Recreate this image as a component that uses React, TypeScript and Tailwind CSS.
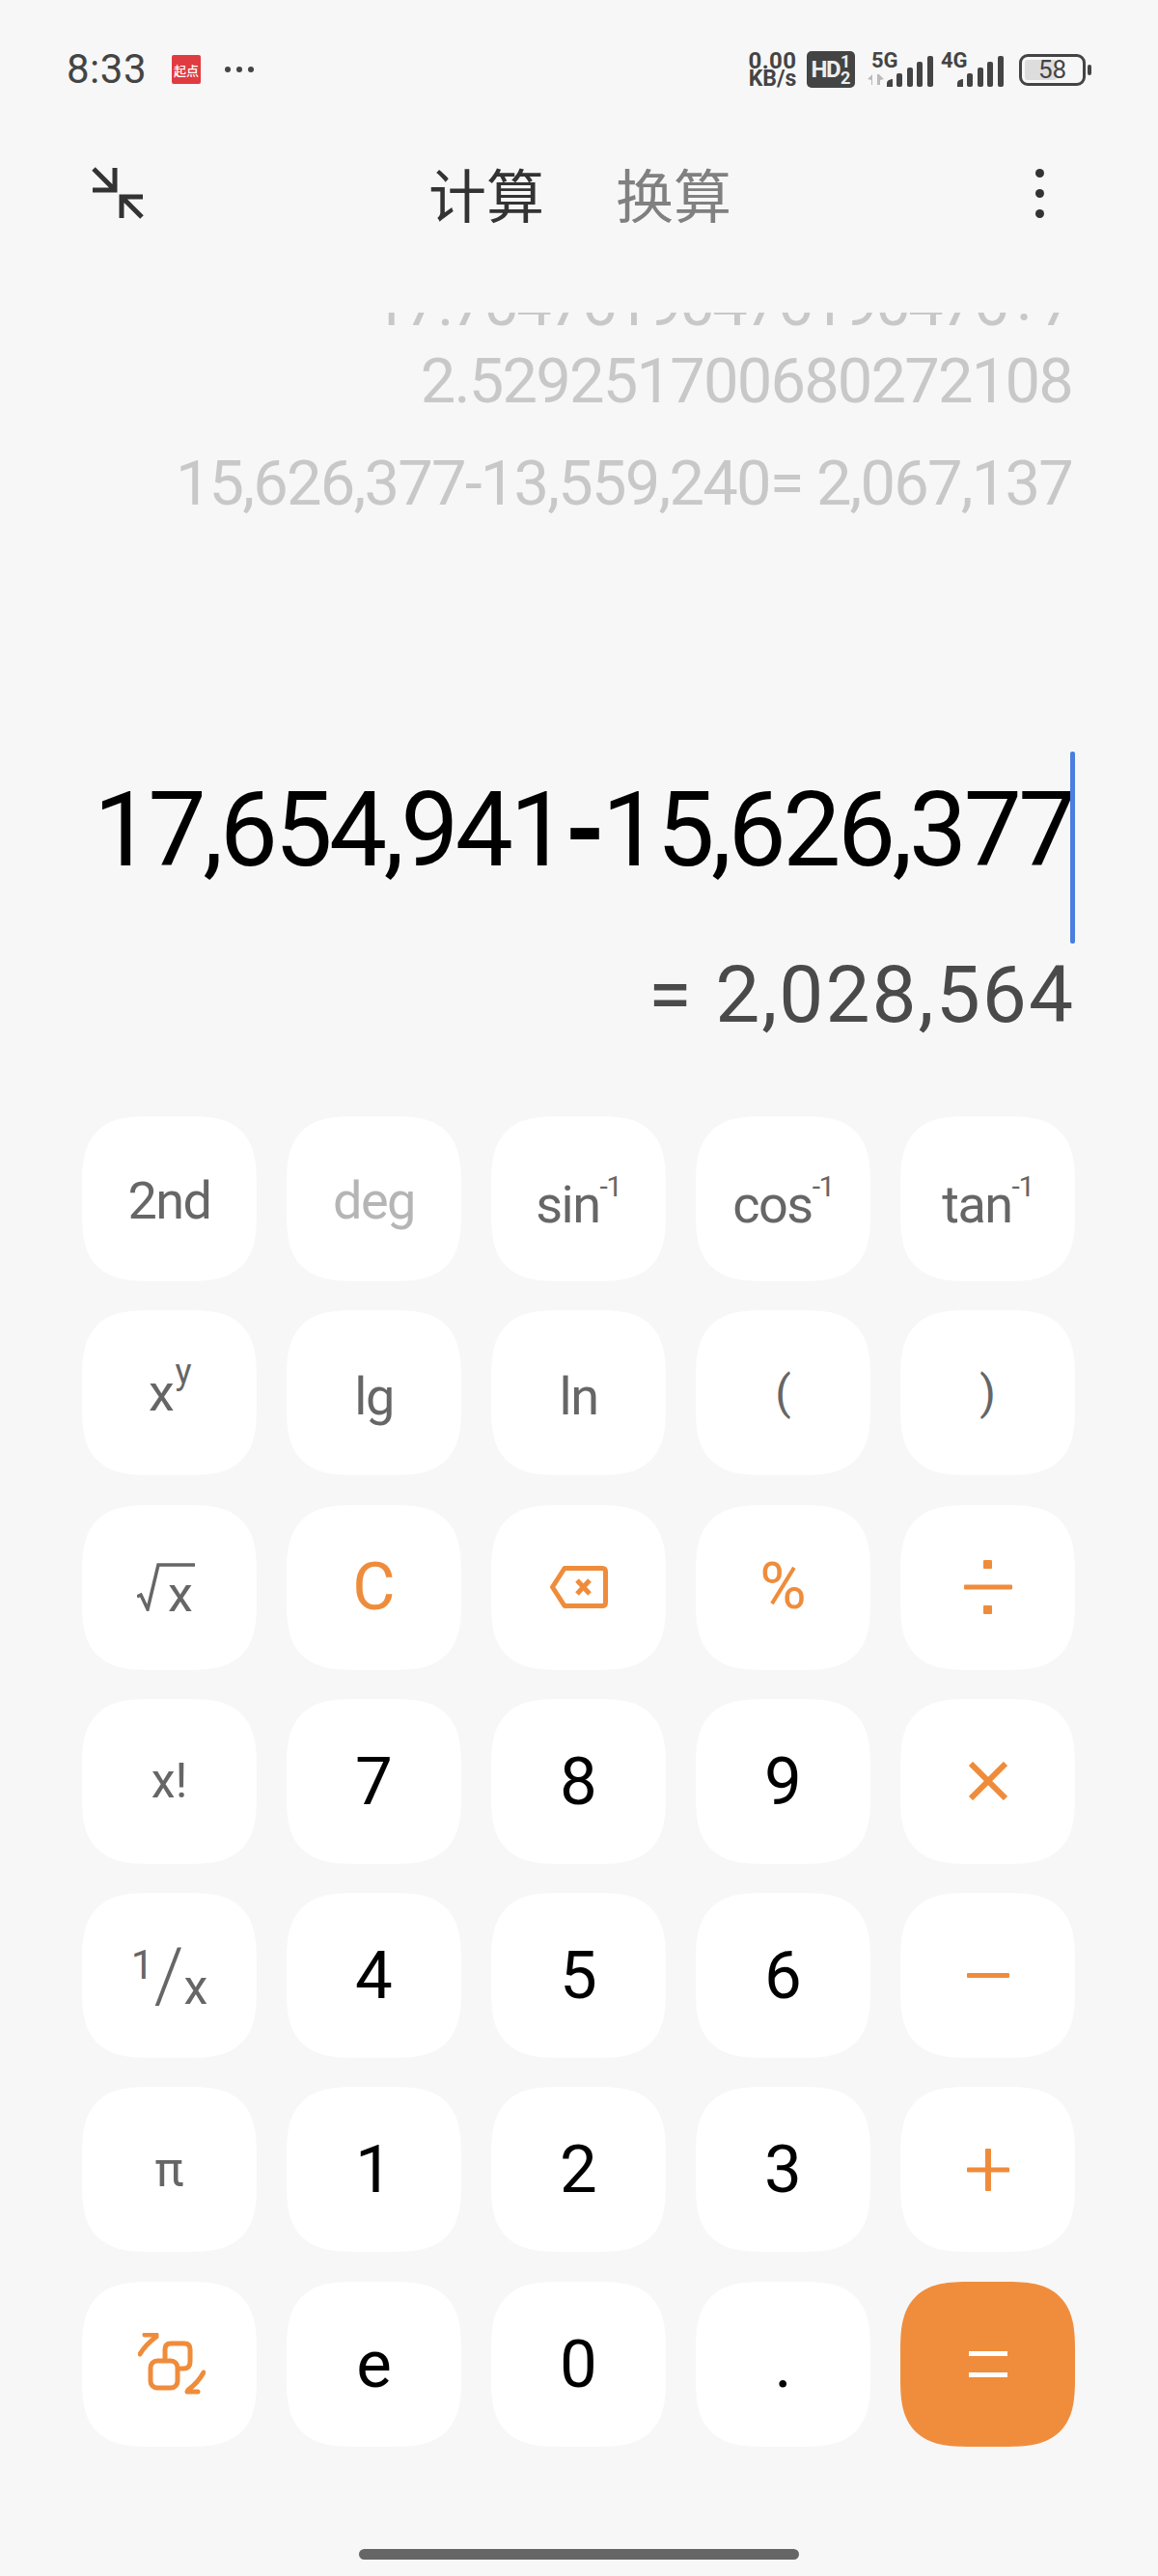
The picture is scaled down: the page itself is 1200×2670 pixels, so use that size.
import type { ReactNode } from "react";

const fnKey = "text-[#666666] text-[54px] tracking-[-1.5px]";
const orangeKey = "text-[#ef8c3b]";

function Key({ children, className = "", bg = "bg-white" }: { children: ReactNode; className?: string; bg?: string }) {
  return (
    <div
      className={`flex items-center justify-center rounded-[72px] [corner-shape:superellipse(1.5)] ${bg} ${className}`}
    >
      {children}
    </div>
  );
}

function Signal() {
  return (
    <svg width="48" height="32" viewBox="0 0 48 32" fill="#444444">
      <path d="M0 32 V28 Q0 25 5 24 H6 V32 Z" />
      <rect x="10" y="18" width="6" height="14" rx="2" />
      <rect x="21" y="12" width="6" height="20" rx="2" />
      <rect x="31" y="6" width="6" height="26" rx="2" />
      <rect x="42" y="0" width="6" height="32" rx="2" />
    </svg>
  );
}

function StatusBar() {
  return (
    <div className="flex h-[144px] items-center">
      <span className="ml-[69px] text-[42px] leading-none tracking-[0.5px] text-[#444444]">8:33</span>
      <div className="ml-[26px] flex h-[30px] w-[30px] items-center justify-center rounded-[2px] bg-[#e13b42] font-['Noto_Sans_CJK_SC'] text-[13px] font-medium leading-none text-white">
        起点
      </div>
      <div className="ml-[25px] flex gap-[6px]">
        <span className="h-[6px] w-[6px] rounded-full bg-[#444444]" />
        <span className="h-[6px] w-[6px] rounded-full bg-[#444444]" />
        <span className="h-[6px] w-[6px] rounded-full bg-[#444444]" />
      </div>

      <div className="ml-[512px] flex w-[51px] flex-col items-center font-bold text-[#444444]">
        <span className="text-[24px] leading-[20px] tracking-[0.4px]">0.00</span>
        <span className="text-[23px] leading-[18px]">KB/s</span>
      </div>
      <div className="ml-[10px] flex h-[38px] w-[50px] items-center justify-center gap-[1px] rounded-[5px] bg-[#444444] font-bold text-[#eeeeee]">
        <span className="text-[24px] leading-none tracking-[-1.5px]">HD</span>
        <span className="flex flex-col text-[18px] leading-[17px]">
          <span>1</span>
          <span>2</span>
        </span>
      </div>
      <div className="relative ml-[13px] h-[36px] w-[68px]">
        <span className="absolute left-[4px] top-[0px] text-[22px] font-bold leading-[18px] text-[#444444]">5G</span>
        <svg className="absolute left-0 top-[22px]" width="18" height="13" viewBox="0 0 18 13" fill="#bbbbbb">
          <path d="M0 6 L5 1 V12 H4 V7 Z" />
          <path d="M10 12 V1 H12 L17 6 L13 7 V12 Z" />
        </svg>
        <div className="absolute right-0 bottom-0 leading-[0]">
          <Signal />
        </div>
      </div>
      <div className="relative ml-[8px] h-[36px] w-[65px]">
        <span className="absolute left-0 top-[0px] text-[22px] font-bold leading-[18px] text-[#444444]">4G</span>
        <div className="absolute right-0 bottom-0 leading-[0]">
          <Signal />
        </div>
      </div>
      <div className="ml-[16px] flex h-[33px] w-[69px] items-center rounded-[9px] border-[3px] border-[#444444] p-[3px]">
        <div className="relative flex h-full w-full">
          <div className="h-full w-[58%] rounded-[3px] bg-[#dddddd]" />
          <span className="absolute left-[14px] top-0 text-[26px] leading-[21px] text-[#444444]">58</span>
        </div>
      </div>
      <div className="ml-[2px] h-[11px] w-[4px] rounded-[2px] bg-[#444444]" />
    </div>
  );
}

function NavBar() {
  return (
    <div className="flex h-[112px] items-center">
      <svg className="ml-[95px]" width="54" height="54" viewBox="0 0 54 54" fill="none" stroke="#333333" strokeWidth="5">
        <path d="M2 2 L24 24 M24 1 V24 H1" />
        <path d="M31 31 L52 52 M31 53 V31 H53" />
      </svg>
      <div className="ml-[295px] flex font-['Noto_Sans_CJK_SC'] text-[60px] leading-none">
        <span className="text-[#333333]">计算</span>
        <span className="ml-[74px] text-[#808080]">换算</span>
      </div>
      <div className="ml-auto mr-[118px] flex flex-col gap-[12px]">
        <span className="h-[9px] w-[9px] rounded-full bg-[#333333]" />
        <span className="h-[9px] w-[9px] rounded-full bg-[#333333]" />
        <span className="h-[9px] w-[9px] rounded-full bg-[#333333]" />
      </div>
    </div>
  );
}

function Display() {
  return (
    <div className="flex flex-col items-end pr-[89px]">
      <div className="mt-[68px] flex h-[217px] w-full flex-col items-end justify-end overflow-hidden text-[65px] leading-[80px] tracking-[-1.8px] text-[#c8c8c8]">
        <div className="whitespace-nowrap tracking-[-2.7px]">17.70476190476190476÷7</div>
        <div className="whitespace-nowrap">2.529251700680272108</div>
        <div className="mt-[26px] whitespace-nowrap">15,626,377-13,559,240= 2,067,137</div>
      </div>
      <div className="mt-[238px] flex h-[199px] items-start">
        <span className="mt-[19px] whitespace-nowrap text-[107px] leading-[125px] tracking-[-3.5px] text-black">
          17,654,941<span className="font-bold">-</span>15,626,377
        </span>
        <span className="-mr-[3px] ml-[-3px] h-[199px] w-[5px] rounded-[2px] bg-[#4a7ee0]" />
      </div>
      <div className="-mr-[3px] mt-[5px] whitespace-nowrap text-[82px] leading-[96px] tracking-[2px] text-[#4a4a4a]">= 2,028,564</div>
    </div>
  );
}

function Keypad() {
  return (
    <div className="mt-[78px] grid grid-cols-[repeat(5,181px)] auto-rows-[171px] gap-x-[31px] gap-y-[30.3px] pl-[85px] text-[69px] leading-none text-black">
      <Key className={`${fnKey} pt-[4px]`}>2nd</Key>
      <Key className="pt-[4px] text-[54px] tracking-[-1.5px] text-[#b5b5b5]">deg</Key>
      <Key className={`${fnKey} pt-[12px]`}>
        sin<span className="mb-[38px] text-[30px]">-1</span>
      </Key>
      <Key className={`${fnKey} pt-[12px]`}>
        cos<span className="mb-[38px] text-[30px]">-1</span>
      </Key>
      <Key className={`${fnKey} pt-[12px]`}>
        tan<span className="mb-[38px] text-[30px]">-1</span>
      </Key>

      <Key className={fnKey}>
        x<span className="mb-[44px] ml-[2px] text-[36px]">y</span>
      </Key>
      <Key className={`${fnKey} pt-[8px]`}>lg</Key>
      <Key className={`${fnKey} pt-[8px]`}>ln</Key>
      <Key className="text-[48px] text-[#666666]">(</Key>
      <Key className="text-[48px] text-[#666666]">)</Key>

      <Key className="text-[#666666]">
        <div className="relative mr-[7px] h-[50px] w-[60px]">
          <svg className="absolute left-0 top-0" width="60" height="50" viewBox="0 0 60 50" fill="none" stroke="#666666" strokeWidth="3.5">
            <path d="M0 35 L4 33 L11 48 L22 2 H60" />
          </svg>
          <span className="absolute left-[32px] top-[15px] text-[52px] leading-[36px]">x</span>
        </div>
      </Key>
      <Key className={`${orangeKey} text-[68px]`}>C</Key>
      <Key>
        <svg width="60" height="44" viewBox="0 0 60 44" fill="none" stroke="#ef8c3b" strokeWidth="5" strokeLinejoin="round">
          <path d="M15 2.5 H54 Q57.5 2.5 57.5 6 V38 Q57.5 41.5 54 41.5 H15 L2.5 22 Z" />
          <path d="M28 15 L41 29 M41 15 L28 29" strokeWidth="5" />
        </svg>
      </Key>
      <Key className={`${orangeKey} text-[66px]`}>%</Key>
      <Key>
        <svg width="50" height="56" viewBox="0 0 50 56" fill="#ef8c3b">
          <rect x="20" y="0" width="9" height="9" rx="1" />
          <rect x="0" y="25.5" width="50" height="5" rx="1" />
          <rect x="20" y="47" width="9" height="9" rx="1" />
        </svg>
      </Key>

      <Key className="text-[50px] text-[#666666]">x!</Key>
      <Key>7</Key>
      <Key>8</Key>
      <Key>9</Key>
      <Key>
        <svg width="40" height="40" viewBox="0 0 40 40" stroke="#ef8c3b" strokeWidth="6">
          <path d="M2 2 L38 38 M38 2 L2 38" />
        </svg>
      </Key>

      <Key className="text-[#666666]">
        <span className="mb-[22px] text-[42px]">1</span>
        <span className="text-[78px] font-light">/</span>
        <span className="mt-[24px] text-[50px]">x</span>
      </Key>
      <Key>4</Key>
      <Key>5</Key>
      <Key>6</Key>
      <Key>
        <div className="h-[5px] w-[44px] rounded-[1px] bg-[#ef8c3b]" />
      </Key>

      <Key className="text-[50px] text-[#666666]">π</Key>
      <Key>1</Key>
      <Key>2</Key>
      <Key>3</Key>
      <Key>
        <svg width="44" height="44" viewBox="0 0 44 44" fill="#ef8c3b">
          <rect x="0" y="19.5" width="44" height="5" rx="1" />
          <rect x="19" y="0" width="6" height="44" rx="1" />
        </svg>
      </Key>

      <Key>
        <svg className="ml-[4px]" width="70" height="64" viewBox="0 0 70 64" fill="none" stroke="#ef8c3b" strokeWidth="5" strokeLinecap="round">
          <rect x="13" y="29" width="28" height="28" rx="7" />
          <path d="M28 26 V17 Q28 11 34 11 H48 Q54 11 54 17 V30 Q54 37 47 37 H44" />
          <path d="M2 22 Q8 12 19 4 M7 2 H19" />
          <path d="M68 41 Q62 52 52 59 M51 61 H62" />
        </svg>
      </Key>
      <Key>e</Key>
      <Key>0</Key>
      <Key>.</Key>
      <Key bg="bg-[#f08d3c]">
        <div className="flex flex-col gap-[17px]">
          <div className="h-[5px] w-[40px] bg-white" />
          <div className="h-[5px] w-[40px] bg-white" />
        </div>
      </Key>
    </div>
  );
}

export default function App() {
  return (
    <div className="flex h-[2670px] w-[1200px] flex-col overflow-hidden bg-[#f7f7f7] font-['Roboto',sans-serif]">
      <StatusBar />
      <NavBar />
      <Display />
      <Keypad />
      <div className="ml-[372px] mt-[106px] h-[11px] w-[456px] rounded-full bg-[#666666]" />
    </div>
  );
}
